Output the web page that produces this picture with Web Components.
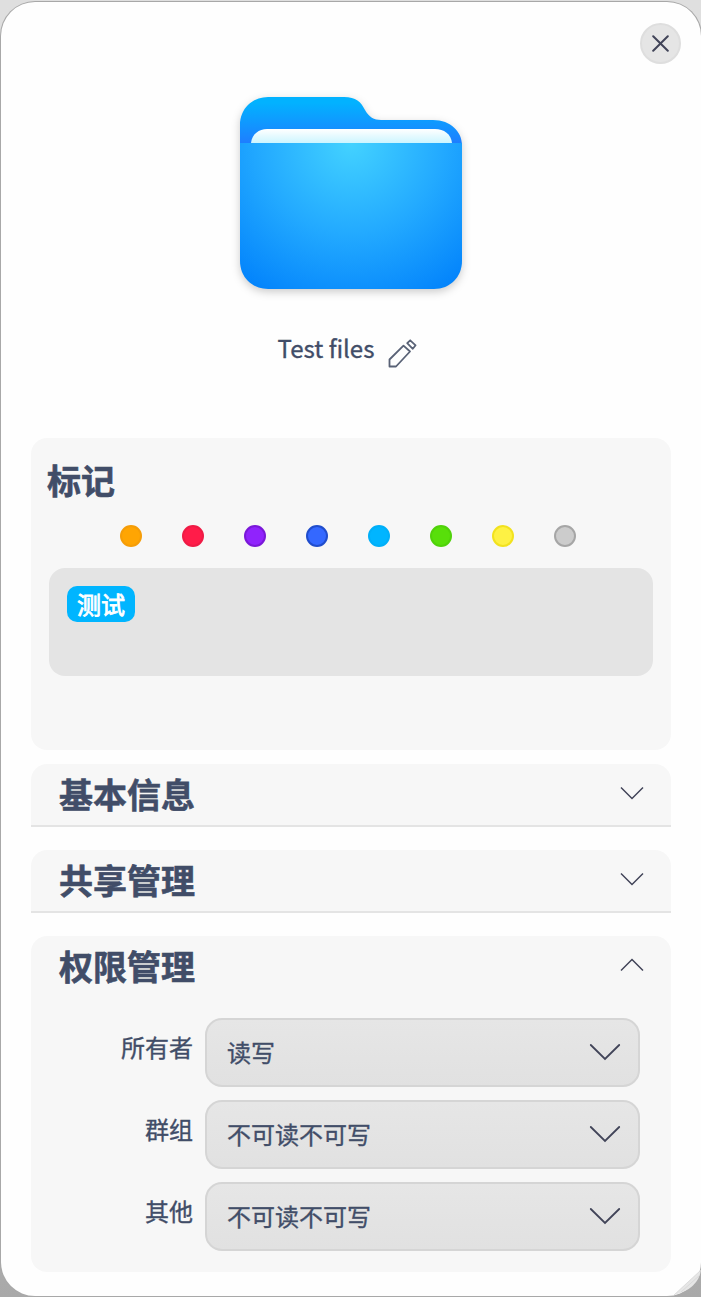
<!DOCTYPE html>
<html lang="zh-CN">
<head>
<meta charset="utf-8">
<title>Test files</title>
<style>
html, body { margin: 0; height: 1297px; overflow: hidden; }
body { background: linear-gradient(#dfdfdf, #e0e0e0 30%, #a9a9a9 100%); font-family: "Noto Sans CJK SC", "Noto Sans", sans-serif; color: #414d68; }
</style>
</head>
<body>
<property-dialog>
  <folder-icon></folder-icon>
  <file-name>Test files</file-name>
  <tag-panel></tag-panel>
  <expand-group heading="基本信息"></expand-group>
  <expand-group heading="共享管理"></expand-group>
  <expand-group heading="权限管理" open>
    <permission-row label="所有者">读写</permission-row>
    <permission-row label="群组">不可读不可写</permission-row>
    <permission-row label="其他">不可读不可写</permission-row>
  </expand-group>
</property-dialog>
<script>
class BaseElement extends HTMLElement {
  connectedCallback() {
    if (this.shadowRoot) return;
    this.attachShadow({ mode: "open" }).innerHTML = this.render();
  }
}

customElements.define("close-button", class extends BaseElement {
  render() {
    return `<style>
      :host { display: grid; place-items: center; box-sizing: border-box; width: 41px; height: 41px; border-radius: 50%; background: #e5e5e5; border: 2px solid #dedede; }
      svg { display: block; }
    </style>
    <svg width="17" height="17" viewBox="0 0 17 17" fill="none" stroke="#414458" stroke-width="2" stroke-linecap="round"><path d="M1.2 1.2l14.6 14.6M15.8 1.2l-14.6 14.6"/></svg>`;
  }
});

customElements.define("property-dialog", class extends BaseElement {
  render() {
    return `<style>
      :host { display: flex; flex-direction: column; align-items: center; box-sizing: border-box; position: relative; width: 700px; height: 1294px; margin: 2px 0 1px 1px; padding: 95px 30px 0; background: #fefefe; border-radius: 34px; box-shadow: 0 0 0 1px #a8a8a8; }
      close-button { position: absolute; top: 20.5px; right: 20.5px; }
      .grip { position: absolute; right: 0; bottom: 0; }
    </style>
    <close-button></close-button>
    <slot></slot>
    <svg class="grip" width="28" height="26" viewBox="0 0 28 26"><path d="M1 25L28 0Q25 19 1 25Z" fill="#e6e6e6"/><path d="M1 25L28 0M8 22L27 5" stroke="#d2d2d2" stroke-width=".7"/></svg>`;
  }
});

customElements.define("folder-icon", class extends BaseElement {
  render() {
    return `<style>
      :host { display: block; width: 222px; height: 192px; filter: drop-shadow(0 3px 4px rgba(0,0,0,.2)); }
      svg { display: block; }
    </style>
    <svg width="222" height="192" viewBox="0 0 222 192">
      <defs>
        <linearGradient id="back" x1="0" y1="0" x2="0" y2="46" gradientUnits="userSpaceOnUse"><stop offset=".12" stop-color="#02b2ff"/><stop offset="1" stop-color="#1e7eff"/></linearGradient>
        <linearGradient id="paper" x1="0" y1="0" x2="0" y2="1"><stop offset="0" stop-color="#fff"/><stop offset="1" stop-color="#ccf5ff"/></linearGradient>
        <radialGradient id="front" cx="111" cy="46" r="181" gradientUnits="userSpaceOnUse"><stop offset="0" stop-color="#43d2ff"/><stop offset=".5" stop-color="#23aaff"/><stop offset="1" stop-color="#0080fb"/></radialGradient>
      </defs>
      <path d="M0 48V28C0 12 12 0 28 0H104C116 0 121 5 125 13C129 20 134 23 141 23H193C211 23 222 35 222 48Z" fill="url(#back)"/>
      <path d="M11 46C12 37 19 32 27 32H195C204 32 211 37 212 46Z" fill="url(#paper)"/>
      <path d="M0 46H222V164C222 180 210 192 194 192H28C12 192 0 180 0 164Z" fill="url(#front)"/>
    </svg>`;
  }
});

customElements.define("file-name", class extends BaseElement {
  render() {
    return `<style>
      :host { display: flex; align-items: center; height: 40px; margin-top: 39px; margin-right: 7px; gap: 14px; font-size: 24px; line-height: 40px; white-space: nowrap; }
      span { -webkit-text-stroke: .35px currentColor; }
      svg { display: block; margin-top: 11px; }
    </style>
    <span><slot></slot></span>
    <svg width="29" height="29" viewBox="0 0 29 29" fill="none" stroke="#596276" stroke-width="1.8" stroke-linejoin="round"><path d="M1.5 27.5V20.5L15.5 6.6L22 12.5L8 27.5ZM19.2 4.2L22.2 1.3L27.6 6.3L24.8 9.8Z"/></svg>`;
  }
});

customElements.define("tag-panel", class extends BaseElement {
  render() {
    const colors = [["#ffa503","#f59d08"],["#ff1c49","#ef1b45"],["#9023fc","#7a18d8"],["#3468ff","#204dcc"],["#00b5ff","#00aff8"],["#58df0a","#50d20a"],["#fef144","#f2e21e"],["#cccccc","#a6a6a6"]];
    return `<style>
      :host { display: block; box-sizing: border-box; width: 640px; height: 312px; margin-top: 70px; padding: 19px 18px 0; border-radius: 16px; background: #f7f7f7; }
      h2 { margin: 0 0 0 -2px; font-size: 34px; line-height: 46px; font-weight: 700; -webkit-text-stroke: .6px currentColor; }
      .dots { display: flex; gap: 40px; margin: 22px 0 0 71px; }
      .dots i { box-sizing: border-box; width: 22px; height: 22px; border-radius: 50%; border: 2px solid; }
      .tags { box-sizing: border-box; display: flex; align-items: flex-start; height: 108px; margin-top: 21px; padding: 18px; border-radius: 16px; background: #e4e4e4; }
      .tag { box-sizing: border-box; width: 68px; height: 36px; border-radius: 10px; background: #00b5ff; color: #fff; font-size: 24px; line-height: 36px; text-align: center; -webkit-text-stroke: .8px #fff; }
    </style>
    <h2>标记</h2>
    <div class="dots">${colors.map(([c, b]) => `<i style="background:${c};border-color:${b}"></i>`).join("")}</div>
    <div class="tags"><span class="tag">测试</span></div>`;
  }
});

customElements.define("expand-group", class extends BaseElement {
  render() {
    return `<style>
      :host { display: block; box-sizing: border-box; width: 640px; height: 63px; margin: 14px 0 9px; border-radius: 16px 16px 0 0; background: #f7f7f7; border-bottom: 2px solid #e4e4e4; }
      :host([open]) { height: 336px; border-bottom: 0; border-radius: 16px; margin-bottom: 0; }
      header { display: flex; justify-content: space-between; align-items: center; height: 60px; padding: 0 27px 0 28px; }
      h2 { margin: 0; font-size: 34px; line-height: 46px; font-weight: 700; -webkit-text-stroke: .6px currentColor; }
      svg { display: block; margin-bottom: 2px; }
      .rows { display: flex; flex-direction: column; gap: 13px; padding: 22px 31px 0 0; }
    </style>
    <header><h2>${this.getAttribute("heading")}</h2>
    <svg width="24" height="14" viewBox="0 0 24 14" fill="none" stroke="#414458" stroke-width="1.5"><path d="${this.hasAttribute("open") ? "M1 12.5L12 1.5L23 12.5" : "M1 1.5L12 12.5L23 1.5"}"/></svg></header>
    ${this.hasAttribute("open") ? '<div class="rows"><slot></slot></div>' : ""}`;
  }
});

customElements.define("permission-row", class extends BaseElement {
  render() {
    return `<style>
      :host { display: flex; justify-content: flex-end; gap: 12px; height: 69px; font-size: 24px; line-height: 36px; }
      label { padding-top: 11px; }
      .select { box-sizing: border-box; display: flex; align-items: center; justify-content: space-between; width: 435px; height: 69px; padding: 0 17px 0 20px; border: 2px solid #d5d5d5; border-radius: 17px; background: linear-gradient(#e6e6e6, #e1e1e1); }
      .select span { padding-bottom: 1px; }
      svg { display: block; margin-bottom: 1px; }
      label, span { -webkit-text-stroke: .35px currentColor; }
    </style>
    <label>${this.getAttribute("label")}</label>
    <div class="select"><span><slot></slot></span>
    <svg width="32" height="18" viewBox="0 0 32 18" fill="none" stroke="#414458" stroke-width="1.8" stroke-linecap="round"><path d="M1.8 2L16 16L30.2 2"/></svg></div>`;
  }
});
</script>
</body>
</html>
